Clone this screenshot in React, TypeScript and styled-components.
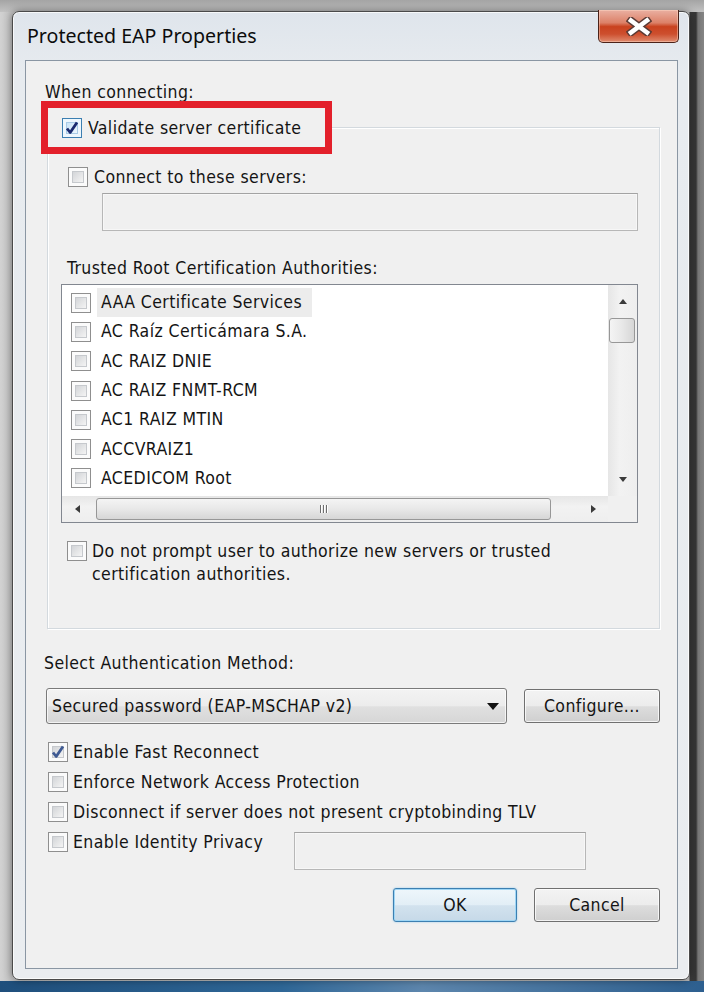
import React from "react";
import styled, { createGlobalStyle } from "styled-components";

const uiFont = `"DejaVu Sans Condensed", "DejaVu Sans", sans-serif`;

const GlobalStyle = createGlobalStyle`
  html, body {
    margin: 0;
    padding: 0;
  }
  body {
    font-family: ${uiFont};
  }
  *, *::before, *::after {
    box-sizing: border-box;
  }
`;

const certificates = [
  "AAA Certificate Services",
  "AC Raíz Certicámara S.A.",
  "AC RAIZ DNIE",
  "AC RAIZ FNMT-RCM",
  "AC1 RAIZ MTIN",
  "ACCVRAIZ1",
  "ACEDICOM Root",
];

type CheckProps = { checked?: boolean; hot?: boolean };

const CheckBox = ({ checked, hot }: CheckProps) => (
  <Box $hot={hot}>
    <BoxInner $hot={hot} />
    {checked && (
      <Tick viewBox="0 0 20 20">
        <path d="M5 10.5 L8.2 14.5 L15 4.5" fill="none" stroke={hot ? "#1b2a6e" : "#3f5a93"} strokeWidth="2.8" strokeLinejoin="round" />
      </Tick>
    )}
  </Box>
);

const Arrow = ({ dir }: { dir: "up" | "down" | "left" | "right" }) => {
  const points = {
    up: "1,6 5,1 9,6",
    down: "1,1 9,1 5,6",
    left: "6,1 6,9 1,5",
    right: "1,1 1,9 6,5",
  }[dir];
  const vertical = dir === "up" || dir === "down";
  return (
    <svg width={vertical ? 10 : 7} height={vertical ? 7 : 10} viewBox={vertical ? "0 0 10 7" : "0 0 7 10"}>
      <polygon points={points} fill="#3b3b3b" />
    </svg>
  );
};

const App = () => {
  return (
    <>
      <GlobalStyle />
      <Screen>
        <Dialog>
          <TitleBar>
            <Title>Protected EAP Properties</Title>
            <CloseButton>
              <svg width="26" height="19" viewBox="0 0 26 19">
                <path d="M5 3.5 L21 15.5 M21 3.5 L5 15.5" stroke="#5a3a34" strokeWidth="7.5" strokeLinecap="square" />
                <path d="M5 3.5 L21 15.5 M21 3.5 L5 15.5" stroke="#ffffff" strokeWidth="4.6" strokeLinecap="square" />
              </svg>
            </CloseButton>
          </TitleBar>

          <Client>
            <Label $indent={1}>When connecting:</Label>

            <Group>
              <Highlight>
                <CheckBox checked hot />
                <span>Validate server certificate</span>
              </Highlight>

              <CheckRow $indent={20} $gap={6} style={{ marginTop: 12 }}>
                <CheckBox />
                <span>Connect to these servers:</span>
              </CheckRow>
              <TextField $width="auto" style={{ margin: "5px 21px 0 54px" }} />

              <Label $indent={19} style={{ marginTop: 26 }}>
                Trusted Root Certification Authorities:
              </Label>

              <ListBox>
                <Items>
                  {certificates.map((name, i) => (
                    <Item key={name}>
                      <CheckBox />
                      <ItemText $focused={i === 0}>{name}</ItemText>
                    </Item>
                  ))}
                </Items>
                <VScroll>
                  <ScrollArrow $h={32}>
                    <Arrow dir="up" />
                  </ScrollArrow>
                  <VThumb />
                  <Spacer />
                  <ScrollArrow $h={33}>
                    <Arrow dir="down" />
                  </ScrollArrow>
                </VScroll>
                <HScroll>
                  <ScrollArrow $w={30}>
                    <Arrow dir="left" />
                  </ScrollArrow>
                  <HThumb>
                    <Grip>
                      <i />
                      <i />
                      <i />
                    </Grip>
                  </HThumb>
                  <Spacer />
                  <ScrollArrow $w={30}>
                    <Arrow dir="right" />
                  </ScrollArrow>
                </HScroll>
                <Corner />
              </ListBox>

              <PromptRow>
                <CheckBox />
                <PromptText>
                  Do not prompt user to authorize new servers or trusted
                  <br />
                  certification authorities.
                </PromptText>
              </PromptRow>
            </Group>

            <Label style={{ marginTop: 23 }}>Select Authentication Method:</Label>

            <MethodRow>
              <Combo>
                <span>Secured password (EAP-MSCHAP v2)</span>
                <svg width="12" height="7" viewBox="0 0 12 7">
                  <polygon points="0,0 12,0 6,7" fill="#111" />
                </svg>
              </Combo>
              <PushButton $width={136}>Configure...</PushButton>
            </MethodRow>

            <Options>
              <CheckRow $indent={4} $gap={5} $height={30}>
                <CheckBox checked />
                <span>Enable Fast Reconnect</span>
              </CheckRow>
              <CheckRow $indent={4} $gap={5} $height={30}>
                <CheckBox />
                <span>Enforce Network Access Protection</span>
              </CheckRow>
              <CheckRow $indent={4} $gap={5} $height={30}>
                <CheckBox />
                <span>Disconnect if server does not present cryptobinding TLV</span>
              </CheckRow>
              <IdentityRow>
                <CheckRow $indent={4} $gap={5} $height={30}>
                  <CheckBox />
                  <span>Enable Identity Privacy</span>
                </CheckRow>
                <TextField $width="292px" style={{ margin: "5px 74px 0 auto" }} />
              </IdentityRow>
            </Options>

            <Footer>
              <PushButton $width={124} $default>
                OK
              </PushButton>
              <PushButton $width={126}>Cancel</PushButton>
            </Footer>
          </Client>
        </Dialog>
      </Screen>
    </>
  );
};

export default App;

const Screen = styled.div`
  width: 704px;
  height: 992px;
  padding: 11px 14px 12px 12px;
  display: flex;
  background:
    linear-gradient(90deg, #1f4f7c 0, #2f6797 40%, #5d86ad 60%, #2d5f8f 100%) 0 981px / 100% 11px no-repeat,
    linear-gradient(to bottom, #a4a4a4 0, #c2c2c2 12px) 0 0 / 100% 12px no-repeat,
    linear-gradient(90deg, #d2d2d2 0, #c4c4c4 11px, #bdbdbd 689px, #3b3b3b 690px, #363636 696px, #777777 698px, #858585 704px);
`;

const Dialog = styled.div`
  flex: 1;
  display: flex;
  flex-direction: column;
  padding: 0 11px 10px 12px;
  border: 1px solid #4a4a4a;
  border-radius: 7px;
  background: linear-gradient(to bottom, #dfe5ec 0, #e7ebef 60px, #eaedf0 100%);
  box-shadow:
    inset 0 0 0 1px rgba(255, 255, 255, 0.75),
    0 0 9px rgba(0, 0, 0, 0.45);
`;

const TitleBar = styled.div`
  height: 48px;
  display: flex;
  align-items: flex-start;
  justify-content: space-between;
`;

const Title = styled.div`
  margin: 12px 0 0 2px;
  font-family: "Noto Sans", "Open Sans", sans-serif;
  font-size: 19.6px;
  line-height: 24px;
  color: #0c0c0c;
`;

const CloseButton = styled.div`
  width: 81px;
  height: 33px;
  margin: -2px -1px 0 0;
  display: grid;
  place-items: center;
  border: 1px solid #4b2219;
  border-top: none;
  border-radius: 0 0 5px 5px;
  background: linear-gradient(
    to bottom,
    #eab0a2 0%,
    #dc8168 40%,
    #c9421f 52%,
    #cd4f2e 75%,
    #e08c70 100%
  );
  box-shadow: inset 0 0 0 1px rgba(255, 220, 200, 0.45);
`;

const Client = styled.div`
  flex: 1;
  display: flex;
  flex-direction: column;
  padding: 20px 17px 0 18px;
  background: #f0f0f0;
  border: 1px solid #8a96a3;
  font-size: 17.5px;
  line-height: 22px;
  letter-spacing: 0.4px;
  color: #141414;
`;

const Label = styled.div<{ $indent?: number }>`
  margin-left: ${(p) => p.$indent ?? 0}px;
  line-height: 22px;
  white-space: nowrap;
`;

const Group = styled.fieldset`
  margin: -2px 0 0 3px;
  padding: 0 0 42px;
  min-width: 0;
  border: 1px solid #d3d9de;
  box-shadow:
    inset 1px 1px 0 #ffffff,
    1px 1px 0 #ffffff;
`;

const Highlight = styled.legend`
  width: 291px;
  height: 53px;
  margin-left: -7px;
  padding: 9px 0 9px 14px;
  display: flex;
  align-items: center;
  gap: 6px;
  border: 7px solid #e3202b;
  background: #f0f0f0;
  white-space: nowrap;
`;

const CheckRow = styled.div<{ $indent: number; $gap: number; $height?: number }>`
  height: ${(p) => p.$height ?? 22}px;
  margin-left: ${(p) => p.$indent}px;
  display: flex;
  align-items: center;
  gap: ${(p) => p.$gap}px;
  white-space: nowrap;
`;

const Box = styled.span<{ $hot?: boolean }>`
  position: relative;
  flex: none;
  width: 20px;
  height: 20px;
  padding: 3px;
  display: flex;
  border: 1px solid ${(p) => (p.$hot ? "#3c7fb1" : "#8f8f8f")};
  background: ${(p) => (p.$hot ? "#eef7fd" : "#fbfbfb")};
`;

const BoxInner = styled.span<{ $hot?: boolean }>`
  flex: 1;
  border: 1px solid ${(p) => (p.$hot ? "#a9cbe6" : "#c6c9cd")};
  background: ${(p) =>
    p.$hot
      ? "linear-gradient(135deg, #c9e3f7, #eef7fd)"
      : "linear-gradient(135deg, #d3d5d8, #f4f4f4)"};
`;

const Tick = styled.svg`
  position: absolute;
  left: -1px;
  top: -1px;
  width: 20px;
  height: 20px;
`;

const TextField = styled.div<{ $width: string }>`
  width: ${(p) => p.$width};
  height: 38px;
  border: 1px solid #b7b7b7;
  border-top-color: #a3a3a3;
  background: #f0f0f0;
  box-shadow: inset 0 0 0 1px #f7f7f7;
`;

const ListBox = styled.div`
  height: 239px;
  margin: 5px 21px 0 13px;
  display: grid;
  grid-template-columns: 1fr 29px;
  grid-template-rows: 1fr 26px;
  border: 1px solid #828790;
  background: #ffffff;
`;

const Items = styled.div`
  padding-top: 3px;
  overflow: hidden;
`;

const Item = styled.div`
  height: 29.3px;
  padding-left: 9px;
  display: flex;
  align-items: center;
  gap: 6px;
  white-space: nowrap;
`;

const ItemText = styled.span<{ $focused?: boolean }>`
  padding: 3px 4px;
  line-height: 23px;
  background: ${(p) => (p.$focused ? "#ececec" : "transparent")};
  ${(p) => p.$focused && "padding-right: 10px;"}
`;

const VScroll = styled.div`
  display: flex;
  flex-direction: column;
  background: linear-gradient(90deg, #e6e6e6, #f2f2f2 40%, #eeeeee);
`;

const HScroll = styled.div`
  display: flex;
  align-items: center;
  background: linear-gradient(to bottom, #e6e6e6, #f2f2f2 40%, #eeeeee);
`;

const Corner = styled.div`
  background: #f0f0f0;
`;

const ScrollArrow = styled.div<{ $h?: number; $w?: number }>`
  flex: none;
  ${(p) => (p.$h ? `height: ${p.$h}px;` : "")}
  ${(p) => (p.$w ? `width: ${p.$w}px; align-self: stretch;` : "")}
  display: grid;
  place-items: center;
`;

const Spacer = styled.div`
  flex: 1;
`;

const VThumb = styled.div`
  height: 25px;
  margin: 1px 2px 0 1px;
  border: 1px solid #979797;
  border-radius: 3px;
  background: linear-gradient(90deg, #f4f4f4, #e8e8e8 50%, #d6d6d6);
`;

const HThumb = styled.div`
  width: 455px;
  height: 22px;
  margin-left: 4px;
  display: grid;
  place-items: center;
  border: 1px solid #979797;
  border-radius: 3px;
  background: linear-gradient(to bottom, #f4f4f4, #e8e8e8 50%, #d6d6d6);
`;

const Grip = styled.span`
  display: flex;
  gap: 2px;

  i {
    width: 1px;
    height: 8px;
    background: #6e6e6e;
    box-shadow: 1px 0 0 #ffffff;
  }
`;

const PromptRow = styled.div`
  margin: 17px 0 0 19px;
  display: flex;
  align-items: flex-start;
  gap: 5px;

  & > span:first-child {
    margin-top: 1px;
  }
`;

const PromptText = styled.div`
  line-height: 23px;
`;

const MethodRow = styled.div`
  margin-top: 14px;
  display: flex;
  align-items: center;
  justify-content: space-between;
`;

const Combo = styled.div`
  width: 461px;
  height: 36px;
  margin-left: 2px;
  padding: 0 7px 0 5px;
  display: flex;
  align-items: center;
  justify-content: space-between;
  border: 1px solid #7a7a7a;
  border-radius: 3px;
  background: linear-gradient(to bottom, #f3f3f3 0%, #ececec 50%, #e0e0e0 52%, #d6d6d6 100%);
  box-shadow: inset 0 0 0 1px rgba(255, 255, 255, 0.7);
  white-space: nowrap;
`;

const PushButton = styled.div<{ $width: number; $default?: boolean }>`
  width: ${(p) => p.$width}px;
  height: 34px;
  display: grid;
  place-items: center;
  border: 1px solid ${(p) => (p.$default ? "#3c7fb1" : "#707070")};
  border-radius: 3px;
  background: ${(p) =>
    p.$default
      ? "linear-gradient(to bottom, #eef6fb 0%, #e2eef6 50%, #d2e2ee 52%, #c6d9e8 100%)"
      : "linear-gradient(to bottom, #f3f3f3 0%, #ececec 50%, #dddddd 52%, #cfcfcf 100%)"};
  box-shadow: ${(p) =>
    p.$default
      ? "inset 0 0 0 1px #9fd6f5, 0 0 2px #8fc6ea"
      : "inset 0 0 0 1px rgba(255, 255, 255, 0.75)"};
  white-space: nowrap;
`;

const Options = styled.div`
  margin-top: 13px;
  display: flex;
  flex-direction: column;
`;

const IdentityRow = styled.div`
  display: flex;
  align-items: flex-start;
`;

const Footer = styled.div`
  margin-top: 18px;
  display: flex;
  justify-content: flex-end;
  gap: 17px;
`;
